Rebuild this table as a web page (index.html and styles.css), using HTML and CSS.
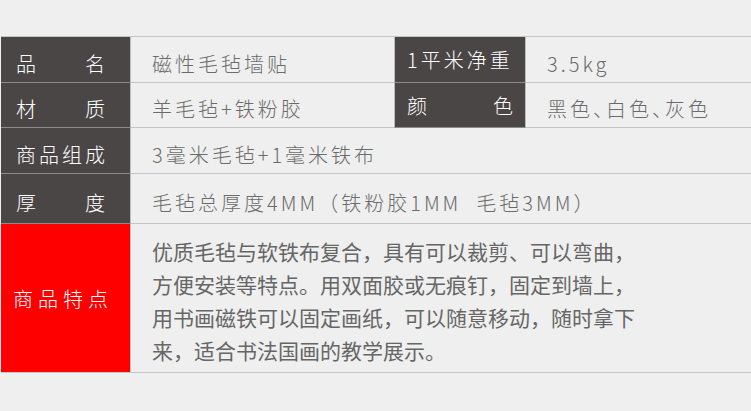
FILE: index.html
```html
<!DOCTYPE html>
<html lang="zh-CN">
<head>
    <meta charset="UTF-8">
    <meta name="viewport" content="width=device-width, initial-scale=1.0">
    <title>磁性毛毡墙贴 参数</title>
    <link rel="stylesheet" href="styles.css">
</head>
<body>

<div class="spec">
    <div class="row r1">
        <div class="label"><span>品</span><span>名</span></div>
        <div class="value">磁性毛毡墙贴</div>
        <div class="label mid">1平米净重</div>
        <div class="value">3.5kg</div>
    </div>
    <div class="row r2">
        <div class="label"><span>材</span><span>质</span></div>
        <div class="value">羊毛毡+铁粉胶</div>
        <div class="label mid"><span>颜</span><span>色</span></div>
        <div class="value tight">黑色、白色、灰色</div>
    </div>
    <div class="row r3">
        <div class="label">商品组成</div>
        <div class="value wide">3毫米毛毡+1毫米铁布</div>
    </div>
    <div class="row r4">
        <div class="label"><span>厚</span><span>度</span></div>
        <div class="value wide">毛毡总厚度4MM（铁粉胶1MM&nbsp;&nbsp;毛毡3MM）</div>
    </div>
    <div class="row r5">
        <div class="label hot">商品特点</div>
        <div class="value wide desc">
            优质毛毡与软铁布复合，具有可以裁剪、可以弯曲，<br>
            方便安装等特点。用双面胶或无痕钉，固定到墙上，<br>
            用书画磁铁可以固定画纸，可以随意移动，随时拿下<br>
            来，适合书法国画的教学展示。
        </div>
    </div>
</div>

</body>
</html>
```

FILE: styles.css
```css
body { margin: 0; background: #efefef; font-family: "Noto Sans CJK SC", "Noto Sans", sans-serif; }

.spec { margin: 36px 0 0 1px; border-top: 1px solid #c4c4c4; }

.row { display: grid; grid-template-columns: 130px 263px 132px 1fr; }
.r1 { height: 46px; }
.r2 { height: 45px; }
.r3 { height: 46px; }
.r4 { height: 50px; }
.r5 { height: 149px; }

.row > div {
    box-sizing: border-box;
    display: flex;
    align-items: center;
    padding-top: 7px;
    border-bottom: 1px solid #c4c4c4;
    font-size: 20px;
    white-space: nowrap;
}

.label {
    justify-content: space-between;
    padding: 0 22px 0 15px;
    background: #4a4646;
    color: #fff;
    font-weight: 300;
    letter-spacing: 3px;
    border-right: 1px solid #bdbdbd;
    border-bottom-color: #8e8a8a !important;
}
.label.mid { padding: 0 9px 0 12px; border-left: 1px solid #bdbdbd; }
.label.hot {
    justify-content: center;
    padding: 0 5px 0 0;
    background: #ff0000;
    letter-spacing: 5px;
    border-bottom-color: #c4c4c4 !important;
}

.value { padding-left: 21px; color: #6b6b6b; font-weight: 300; letter-spacing: 3px; }
.value.wide { grid-column: span 3; }
.value.tight { font-feature-settings: "halt"; }

.row > .desc {
    align-items: flex-start;
    padding-top: 11px;
    font-size: 21px;
    font-weight: 400;
    line-height: 33px;
    letter-spacing: 0;
    color: #666;
}
```
